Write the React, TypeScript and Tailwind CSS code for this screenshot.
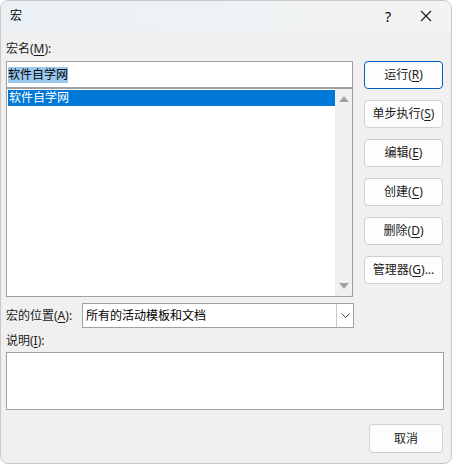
import React from "react";

const font = { fontFamily: '"Segoe UI", "Noto Sans", "Noto Sans CJK SC", sans-serif' };

const Btn: React.FC<{ label: string; k?: string; suffix?: string; primary?: boolean }> = ({
  label,
  k,
  suffix = "",
  primary,
}) => (
  <button
    className={`h-[28px] w-[79px] rounded-[4px] border bg-[#fdfdfd] text-[12px] text-[#1a1a1a] flex items-center justify-center ${
      primary ? "border-[#005fb8]" : "border-[#d0d0d0]"
    }`}
  >
    {label}
    {k && (
      <>
        (<span className="underline underline-offset-2">{k}</span>)
      </>
    )}
    {suffix}
  </button>
);

const App: React.FC = () => {
  return (
    <div className="w-[452px] h-[465px] bg-white" style={font}>
      <div className="w-[452px] h-[464px] rounded-[8px] border border-[#c8c8c8] bg-[#f0f0f0] overflow-hidden flex flex-col">
        {/* Title bar */}
        <div className="h-[30px] shrink-0 flex items-center bg-gradient-to-r from-[#eaf1f5] to-[#f3f3f3] text-[12px] text-black">
          <span className="ml-[9px]">宏</span>
          <span className="ml-auto mr-[29px] text-[14px]">?</span>
          <svg width="12" height="12" viewBox="0 0 12 12" className="mr-[19px]">
            <path d="M1 1 L11 11 M11 1 L1 11" stroke="#1a1a1a" strokeWidth="1.1" />
          </svg>
        </div>

        {/* Body */}
        <div className="flex pl-[5px] pt-[11px] text-[12px] text-[#1a1a1a]">
          <div className="w-[347px] flex flex-col">
            <div className="h-[19px] leading-[14px]">
              宏名(<span className="underline underline-offset-2">M</span>):
            </div>
            <div className="h-[27px] border border-[#a0a0a0] bg-white flex items-center pl-[1px]">
              <span className="bg-[#99c9ef] leading-[16px] text-black">软件自学网</span>
            </div>
            <div className="h-[209px] border border-[#a0a0a0] bg-white flex">
              <div className="flex-1 pl-[1px] pt-[1px]">
                <div className="h-[16px] bg-[#0078d7] text-white leading-[16px] pl-[1px]">软件自学网</div>
              </div>
              <div className="w-[17px] bg-[#f0f0f0] flex flex-col items-center justify-between py-[7px]">
                <svg width="10" height="6" viewBox="0 0 10 6">
                  <path d="M0 6 L5 0 L10 6 Z" fill="#a3a3a3" />
                </svg>
                <svg width="10" height="6" viewBox="0 0 10 6">
                  <path d="M0 0 L5 6 L10 0 Z" fill="#a3a3a3" />
                </svg>
              </div>
            </div>
          </div>
          <div className="ml-[11px] pt-[19px] flex flex-col gap-[11px]">
            <Btn label="运行" k="R" primary />
            <Btn label="单步执行" k="S" />
            <Btn label="编辑" k="E" />
            <Btn label="创建" k="C" />
            <Btn label="删除" k="D" />
            <Btn label="管理器" k="G" suffix="..." />
          </div>
        </div>

        <div className="flex items-center pl-[5px] mt-[6px] text-[12px] text-[#1a1a1a]">
          <span className="w-[76px]">
            宏的位置(<span className="underline underline-offset-2">A</span>):
          </span>
          <div className="w-[272px] h-[25px] border border-[#a0a0a0] bg-white flex">
            <span className="flex-1 pl-[3px] leading-[23px] text-black">所有的活动模板和文档</span>
            <div className="w-[17px] border-l border-[#c8c8c8] flex items-center justify-center">
              <svg width="9" height="5" viewBox="0 0 9 5">
                <path d="M0.5 0.5 L4.5 4.5 L8.5 0.5" stroke="#444" strokeWidth="1" fill="none" />
              </svg>
            </div>
          </div>
        </div>

        <div className="pl-[5px] mt-[4px] text-[12px] text-[#1a1a1a] h-[18px] leading-[18px]">
          说明(<span className="underline underline-offset-2">I</span>):
        </div>
        <div className="ml-[5px] w-[438px] h-[58px] mt-[2px] border border-[#a0a0a0] bg-white" />

        <div className="flex justify-end pr-[8px] mt-[14px]">
          <button className="h-[29px] w-[74px] rounded-[4px] border border-[#d0d0d0] bg-[#fdfdfd] text-[12px] text-[#1a1a1a]">
            取消
          </button>
        </div>
      </div>
    </div>
  );
};

export default App;
